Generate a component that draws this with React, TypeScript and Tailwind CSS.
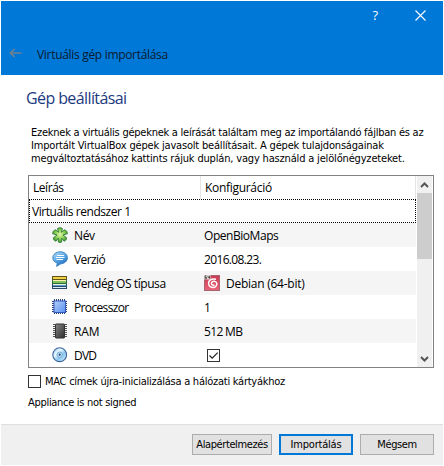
import type { ReactNode } from 'react';

const ui = "font-['Open_Sans','Noto_Sans',sans-serif]";
const tahoma = "font-['DejaVu_Sans_Condensed','DejaVu_Sans',sans-serif]";

function NameIcon() {
  return (
    <svg width="16" height="16" viewBox="0 0 16 16">
      <defs>
        <radialGradient id="leaf" cx="50%" cy="45%">
          <stop offset="0" stopColor="#e2f5a8" />
          <stop offset="0.6" stopColor="#8fd05a" />
          <stop offset="1" stopColor="#4fa53a" />
        </radialGradient>
      </defs>
      <path
        d="M6.600 5.200L5.500 1.500Q8 -0.200 10.400 1.500L9.300 5.200L12.600 2.800Q15.500 3.800 15.400 6.700L11 8L14.600 10.800Q14.600 13.500 12 14.200L9.700 11.200L9.600 15Q8 16 6.300 15L6.300 11.200L3.900 14.200Q1.200 13.400 1.400 10.800L5 8L0.600 6.700Q0.500 3.800 3.400 2.800z"
        fill="url(#leaf)"
        stroke="#35823a"
        strokeWidth="1"
        strokeLinejoin="round"
      />
    </svg>
  );
}

function VersionIcon() {
  return (
    <svg width="16" height="16" viewBox="0 0 16 16">
      <defs>
        <linearGradient id="bubble" x1="0" y1="0" x2="0.6" y2="1">
          <stop offset="0" stopColor="#b9def8" />
          <stop offset="0.55" stopColor="#5aa8e8" />
          <stop offset="1" stopColor="#2169bd" />
        </linearGradient>
      </defs>
      <path
        d="M8.200.8c4.100 0 7.200 2.500 7.200 5.900s-3 6-6.600 6.100L4.600 15.400l.7-3.300C2.500 11.200.8 9.200.8 6.800.8 3.300 4.100.8 8.200.8z"
        fill="url(#bubble)"
        stroke="#347fbd"
        strokeWidth="0.9"
      />
      <path d="M5 4.500h7M4 6.500h8.500M4.500 8.500h6.500" stroke="#fff" strokeWidth="1.100" />
    </svg>
  );
}

function OsTypeIcon() {
  return (
    <svg width="16" height="16" viewBox="0 0 16 16" shapeRendering="crispEdges">
      <rect x="0" y="1" width="15" height="4" fill="#5c5418" />
      <rect x="1" y="2" width="13" height="2" fill="#f2ce45" />
      <rect x="0" y="5" width="15" height="4" fill="#2f6b41" />
      <rect x="1" y="5" width="13" height="1" fill="#fff3b0" />
      <rect x="1" y="6" width="13" height="2" fill="#7fc15f" />
      <rect x="0" y="9" width="15" height="5" fill="#27496a" />
      <rect x="1" y="9" width="13" height="1" fill="#e8f6d8" />
      <rect x="1" y="10" width="13" height="1" fill="#5b9ad0" />
      <rect x="1" y="12" width="13" height="1" fill="#d9ecfa" />
    </svg>
  );
}

function CpuIcon() {
  return (
    <svg width="16" height="16" viewBox="0 0 16 16">
      <defs>
        <linearGradient id="cpu" x1="0" y1="0" x2="1" y2="1">
          <stop offset="0" stopColor="#b5d0fa" />
          <stop offset="1" stopColor="#5a8ff0" />
        </linearGradient>
      </defs>
      <path d="M2 1H14M2 14H14M1 2V14M14 2V14" stroke="#333e70" strokeWidth="2" strokeDasharray="1 1" />
      <rect x="2" y="2" width="11.500" height="11.500" fill="url(#cpu)" stroke="#315ac0" />
    </svg>
  );
}

function RamIcon() {
  return (
    <svg width="16" height="16" viewBox="0 0 16 16">
      <defs>
        <linearGradient id="ram" x1="0" y1="0" x2="1" y2="1">
          <stop offset="0" stopColor="#858585" />
          <stop offset="1" stopColor="#2c2c2c" />
        </linearGradient>
      </defs>
      <path d="M2 1v14M14 1v14" stroke="#555" strokeWidth="2" strokeDasharray="1 1" />
      <rect x="3.500" y="1" width="9" height="14" rx="0.500" fill="url(#ram)" stroke="#303030" />
    </svg>
  );
}

function DvdIcon() {
  return (
    <svg width="16" height="16" viewBox="0 0 16 16">
      <defs>
        <linearGradient id="disc" x1="0" y1="0" x2="1" y2="1">
          <stop offset="0" stopColor="#8dc4ec" />
          <stop offset="0.350" stopColor="#eaf7ff" />
          <stop offset="0.600" stopColor="#8cc8f0" />
          <stop offset="1" stopColor="#d8efff" />
        </linearGradient>
      </defs>
      <circle cx="7.700" cy="7.700" r="6.900" fill="url(#disc)" stroke="#40679a" strokeWidth="1.100" />
      <circle cx="7.700" cy="7.700" r="2.700" fill="#c5e7fb" stroke="#5d9dcc" strokeWidth="0.800" />
      <circle cx="7.700" cy="7.700" r="1.100" fill="#27456c" />
    </svg>
  );
}

function DebianIcon() {
  return (
    <svg width="16" height="16" viewBox="0 0 16 16" className="mr-[6px]">
      <defs>
        <linearGradient id="deb" x1="0" y1="0" x2="0" y2="1">
          <stop offset="0" stopColor="#c93b52" />
          <stop offset="1" stopColor="#ea6478" />
        </linearGradient>
      </defs>
      <rect x="0.500" y="0.500" width="15" height="15" fill="url(#deb)" stroke="#a9656d" />
      <path
        d="M10.500 9.800C8.500 10.800 6.900 9.200 7.600 7.600C8.600 5.400 12.300 5.800 12.800 8.400C13.200 11 11 12.700 8.600 12.500C5.300 12.200 3.600 9.200 5 6.400C6.100 4.200 8.600 3.400 12 4.300"
        fill="none"
        stroke="#fff"
        strokeWidth="1.500"
      />
      <rect x="0" y="0" width="6.500" height="4.500" fill="#e8dcdc" />
      <path d="M2.500 0.800H1v3h1.500V2.300H1M4 0.800v1.600h2M5.500 0.800v3.200" fill="none" stroke="#444" strokeWidth="0.800" />
    </svg>
  );
}

function CheckBox({ checked = false }: { checked?: boolean }) {
  return (
    <span className="flex h-[13px] w-[13px] shrink-0 items-center justify-center border border-[#333] bg-white">
      {checked && (
        <svg width="11" height="11" viewBox="0 0 11 11">
          <path d="M1.500 5.500L4.200 8.200L9.700 2.700" fill="none" stroke="#222" strokeWidth="1.200" />
        </svg>
      )}
    </span>
  );
}

interface Row {
  icon: ReactNode;
  label: string;
  labelClass: string;
  value: ReactNode;
}

const rows: Row[] = [
  { icon: <NameIcon />, label: 'Név', labelClass: 'tracking-[-0.4px]', value: <span className="pt-px tracking-[-0.45px]">OpenBioMaps</span> },
  { icon: <VersionIcon />, label: 'Verzió', labelClass: 'tracking-[-0.6px]', value: <span className="pt-px tracking-[-0.65px]">2016.08.23.</span> },
  {
    icon: <OsTypeIcon />,
    label: 'Vendég OS típusa',
    labelClass: 'tracking-[-0.42px]',
    value: (
      <>
        <DebianIcon />
        <span className="pt-px tracking-[-0.25px]">Debian (64-bit)</span>
      </>
    ),
  },
  { icon: <CpuIcon />, label: 'Processzor', labelClass: 'tracking-[-0.65px]', value: <span className="pt-px">1</span> },
  { icon: <RamIcon />, label: 'RAM', labelClass: 'tracking-[-0.1px]', value: <span className="pt-px tracking-[-0.65px]">512 MB</span> },
  { icon: <DvdIcon />, label: 'DVD', labelClass: 'tracking-[-0.8px]', value: <span className="pt-px pl-[3px]"><CheckBox checked /></span> },
];

function Header() {
  return (
    <header className="flex h-[74px] flex-col bg-[#0078d7]">
      <div className="flex h-[28px] items-center justify-end">
        <span className={`${ui} mr-[37px] text-[13px] leading-none text-white`}>?</span>
        <svg width="11" height="11" viewBox="0 0 11 11" className="mr-[17px]">
          <path d="M0.500 0.500L10.500 10.500M10.500 0.500L0.500 10.500" stroke="#fff" strokeWidth="1.100" />
        </svg>
      </div>
      <div className="flex h-[46px] items-center pl-[8px]">
        <svg width="13" height="10" viewBox="0 0 13 10" className="mt-px">
          <path d="M12.500 5H1.500M5.500 1L1.500 5L5.500 9" fill="none" stroke="#71808e" strokeWidth="1.700" />
        </svg>
        <h1 className={`${ui} ml-[15px] pt-[5px] text-[12px] tracking-[-0.31px] whitespace-nowrap text-[#0a1a30]`}>Virtuális gép importálása</h1>
      </div>
    </header>
  );
}

function ScrollBar() {
  return (
    <div className="flex w-[15px] flex-col bg-[#f0f0f0]">
      <div className="flex h-[17px] items-center justify-center">
        <svg width="9" height="6" viewBox="0 0 9 6">
          <path d="M1 5L4.500 1.500L8 5" fill="none" stroke="#555" strokeWidth="2" />
        </svg>
      </div>
      <div className="h-[66px] bg-[#cdcdcd]" />
      <div className="flex-1" />
      <div className="flex h-[17px] items-center justify-center">
        <svg width="9" height="6" viewBox="0 0 9 6">
          <path d="M1 1L4.500 4.500L8 1" fill="none" stroke="#555" strokeWidth="2" />
        </svg>
      </div>
    </div>
  );
}

export default function App() {
  return (
    <div className="flex h-[466px] w-[444px] flex-col overflow-hidden bg-white p-px text-black">
      <Header />
      <main className="flex h-[349px] flex-col pr-[9px] pl-[27px]">
        <h2 className={`${ui} mt-[12px] -ml-[2px] text-[16px] leading-[22px] tracking-[-0.6px] text-[#1c3a80]`}>Gép beállításai</h2>
        <div className={`${tahoma} mt-[17px] ml-[3px] text-[11px] leading-[13px] whitespace-nowrap`}>
          <p className="tracking-[-0.25px]">Ezeknek a virtuális gépeknek a leírását találtam meg az importálandó fájlban és az</p>
          <p className="tracking-[-0.19px]">Importált VirtualBox gépek javasolt beállításait. A gépek tulajdonságainak</p>
          <p className="tracking-[-0.17px]">megváltoztatásához kattints rájuk duplán, vagy használd a jelölőnégyzeteket.</p>
        </div>
        <section className="mt-[10px] flex h-[193px] w-[406px] border border-[#828282] pr-px">
          <div className={`${ui} mr-px flex flex-1 flex-col text-[12px] whitespace-nowrap`}>
            <div className="flex h-[23px] items-center">
              <span className="flex h-full w-[172px] items-center border-r border-[#e5e5e5] pt-px pl-[4px] tracking-[-0.45px]">Leírás</span>
              <span className="flex h-full flex-1 items-center border-r border-[#e5e5e5] pt-px pl-[4px] tracking-[-0.3px]">Konfiguráció</span>
            </div>
            <div className="flex h-[24px] items-center border border-dotted border-black pt-px pl-[2px] tracking-[-0.45px]">Virtuális rendszer 1</div>
            {rows.map((r) => (
              <div key={r.label} className="flex h-[24px] items-center odd:bg-[#f5f5f5]">
                <span className="ml-[23px] w-[22px]">{r.icon}</span>
                <span className={`w-[130px] pt-px ${r.labelClass}`}>{r.label}</span>
                {r.value}
              </div>
            ))}
          </div>
          <ScrollBar />
        </section>
        <label className={`${tahoma} mt-[7px] flex h-[13px] items-center gap-[4px] text-[11px] whitespace-nowrap`}>
          <CheckBox />
          <span className="pt-px tracking-[-0.25px]">MAC címek újra-inicializálása a hálózati kártyákhoz</span>
        </label>
        <p className={`${tahoma} mt-[8px] text-[11px] leading-[13px] tracking-[-0.3px]`}>Appliance is not signed</p>
      </main>
      <footer className={`${tahoma} flex h-[41px] items-start border-t border-[#dfdfdf] bg-[#f0f0f0] pt-[9px] pl-[191px] text-[11px] whitespace-nowrap`}>
        <button className="h-[21px] w-[80px] border border-[#adadad] bg-[#e1e1e1] pt-px tracking-[-0.4px]">Alapértelmezés</button>
        <button className="ml-[7px] h-[21px] w-[74px] border-2 border-[#0078d7] bg-[#e1e1e1] pt-px tracking-[-0.2px]">Importálás</button>
        <button className="ml-[7px] h-[21px] w-[74px] border border-[#adadad] bg-[#e1e1e1] pt-px tracking-[-0.4px]">Mégsem</button>
      </footer>
    </div>
  );
}
